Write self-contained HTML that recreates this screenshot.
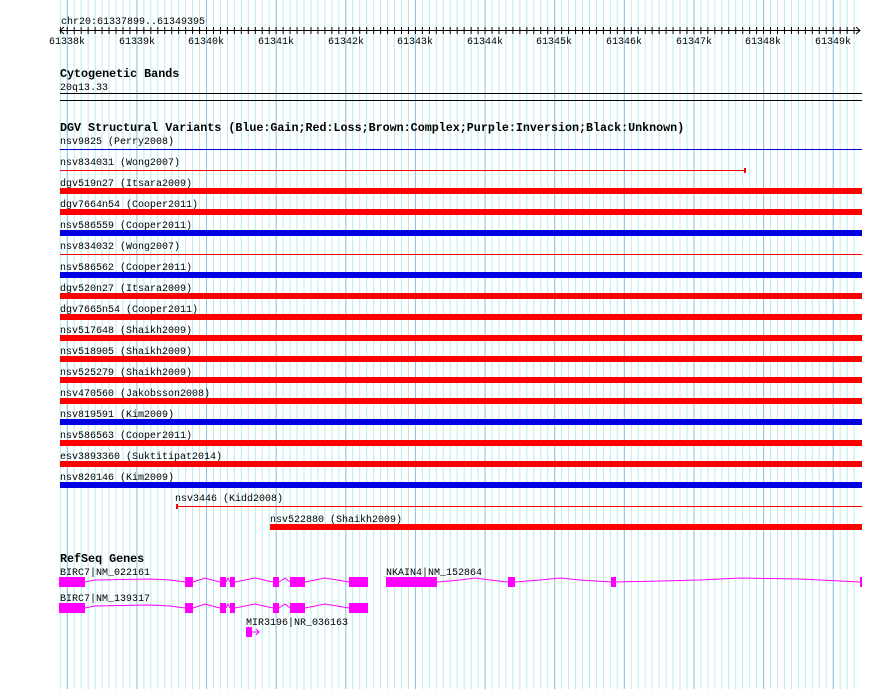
<!DOCTYPE html>
<html><head><style>body{margin:0;background:#fff}svg{display:block}text{font-family:"Liberation Mono",monospace;font-size:10px;fill:#000}.b{font-weight:bold;font-size:11.7px}</style></head><body>
<svg width="890" height="689" xmlns="http://www.w3.org/2000/svg">
<defs><pattern id="g" x="59.8" y="0" width="6.963" height="689" patternUnits="userSpaceOnUse"><rect x="0" y="0" width="1" height="689" fill="#b4ecf0"/></pattern>
<pattern id="G" x="66.8" y="0" width="69.63" height="689" patternUnits="userSpaceOnUse"><rect x="0" y="0" width="1" height="689" fill="#88c4e8"/></pattern>
<pattern id="t" x="59.8" y="0" width="6.963" height="10" patternUnits="userSpaceOnUse"><rect x="0" y="0" width="1" height="10" fill="#000"/></pattern></defs>
<rect x="59" y="0" width="796" height="689" fill="url(#g)"/>
<rect x="60" y="0" width="795" height="689" fill="url(#G)"/>
<text x="61" y="24">chr20:61337899..61349395</text>
<rect x="60" y="30" width="800" height="1" fill="#000"/>
<rect x="60" y="27" width="796" height="7" fill="url(#t)"/>
<path d="M64 27 L60 30.5 L64 34 M856 27 L860 30.5 L856 34" stroke="#000" fill="none"/>
<g text-anchor="middle"><text x="67" y="44">61338k</text><text x="137" y="44">61339k</text><text x="206" y="44">61340k</text><text x="276" y="44">61341k</text><text x="346" y="44">61342k</text><text x="415" y="44">61343k</text><text x="485" y="44">61344k</text><text x="554" y="44">61345k</text><text x="624" y="44">61346k</text><text x="694" y="44">61347k</text><text x="763" y="44">61348k</text><text x="833" y="44">61349k</text></g>
<text class="b" x="60" y="77">Cytogenetic Bands</text>
<text x="60" y="90">20q13.33</text>
<rect x="60" y="93" width="802" height="1" fill="#000"/><rect x="60" y="100" width="802" height="1" fill="#000"/>
<text class="b" x="60" y="131">DGV Structural Variants (Blue:Gain;Red:Loss;Brown:Complex;Purple:Inversion;Black:Unknown)</text>
<text x="60" y="144">nsv9825 (Perry2008)</text><rect x="60" y="149" width="802" height="1" fill="#0000d0"/>
<text x="60" y="165">nsv834031 (Wong2007)</text><rect x="60" y="170" width="686" height="1" fill="#f00"/><rect x="744" y="168" width="2" height="5" fill="#f00"/>
<text x="60" y="186">dgv519n27 (Itsara2009)</text><rect x="60" y="188" width="802" height="6" fill="#f00"/>
<text x="60" y="207">dgv7664n54 (Cooper2011)</text><rect x="60" y="209" width="802" height="6" fill="#f00"/>
<text x="60" y="228">nsv586559 (Cooper2011)</text><rect x="60" y="230" width="802" height="6" fill="#0000e0"/>
<text x="60" y="249">nsv834032 (Wong2007)</text><rect x="60" y="254" width="802" height="1" fill="#f00"/>
<text x="60" y="270">nsv586562 (Cooper2011)</text><rect x="60" y="272" width="802" height="6" fill="#0000e0"/>
<text x="60" y="291">dgv520n27 (Itsara2009)</text><rect x="60" y="293" width="802" height="6" fill="#f00"/>
<text x="60" y="312">dgv7665n54 (Cooper2011)</text><rect x="60" y="314" width="802" height="6" fill="#f00"/>
<text x="60" y="333">nsv517648 (Shaikh2009)</text><rect x="60" y="335" width="802" height="6" fill="#f00"/>
<text x="60" y="354">nsv518905 (Shaikh2009)</text><rect x="60" y="356" width="802" height="6" fill="#f00"/>
<text x="60" y="375">nsv525279 (Shaikh2009)</text><rect x="60" y="377" width="802" height="6" fill="#f00"/>
<text x="60" y="396">nsv470560 (Jakobsson2008)</text><rect x="60" y="398" width="802" height="6" fill="#f00"/>
<text x="60" y="417">nsv819591 (Kim2009)</text><rect x="60" y="419" width="802" height="6" fill="#0000e0"/>
<text x="60" y="438">nsv586563 (Cooper2011)</text><rect x="60" y="440" width="802" height="6" fill="#f00"/>
<text x="60" y="459">esv3893360 (Suktitipat2014)</text><rect x="60" y="461" width="802" height="6" fill="#f00"/>
<text x="60" y="480">nsv820146 (Kim2009)</text><rect x="60" y="482" width="802" height="6" fill="#0000e0"/>
<text x="175" y="501">nsv3446 (Kidd2008)</text><rect x="176" y="506" width="686" height="1" fill="#f00"/><rect x="176" y="504" width="2" height="5" fill="#f00"/>
<text x="270" y="522">nsv522880 (Shaikh2009)</text><rect x="270" y="524" width="592" height="6" fill="#f00"/>
<text class="b" x="60" y="562">RefSeq Genes</text>
<text x="60" y="575">BIRC7|NM_022161</text>
<text x="60" y="601">BIRC7|NM_139317</text>
<text x="386" y="575">NKAIN4|NM_152864</text>
<text x="246" y="625">MIR3196|NR_036163</text>
<g fill="#f0f" stroke="none">
<rect x="59" y="577" width="26" height="10"/><rect x="185" y="577" width="8" height="10"/><rect x="220" y="577" width="6" height="10"/><rect x="230" y="577" width="5" height="10"/><rect x="273" y="577" width="6" height="10"/><rect x="290" y="577" width="15" height="10"/><rect x="349" y="577" width="19" height="10"/>
<rect x="59" y="603" width="26" height="10"/><rect x="185" y="603" width="8" height="10"/><rect x="220" y="603" width="6" height="10"/><rect x="230" y="603" width="5" height="10"/><rect x="273" y="603" width="6" height="10"/><rect x="290" y="603" width="15" height="10"/><rect x="349" y="603" width="19" height="10"/>
<rect x="386" y="577" width="51" height="10"/><rect x="508" y="577" width="7" height="10"/><rect x="611" y="577" width="5" height="10"/><rect x="860" y="577" width="2" height="10"/>
<rect x="246" y="627" width="6" height="10"/>
</g>
<g stroke="#f0f" fill="none" stroke-width="1">
<path d="M85 582 L95 580 L150 579 L170 580 L185 582 M193 582 L205 578 L220 582 M226 582 L228 578 L230 582 M235 582 L255 578 L273 582 M279 582 L285 578 L290 582 M305 582 L325 578 L349 582"/>
<path d="M85 608 L95 606 L150 605 L170 606 L185 608 M193 608 L205 604 L220 608 M226 608 L228 604 L230 608 M235 608 L255 604 L273 608 M279 608 L285 604 L290 608 M305 608 L325 604 L349 608"/>
<path d="M437 582 L460 580 L475 578 L490 580 L508 582 M515 582 L540 580 L560 578 L580 580 L611 582 M616 582 L660 581 L700 580 L740 578 L800 579 L860 582"/>
<path d="M252 632 L259 632 M256 629 L259 632 L256 635"/>
</g>
</svg>
</body></html>
